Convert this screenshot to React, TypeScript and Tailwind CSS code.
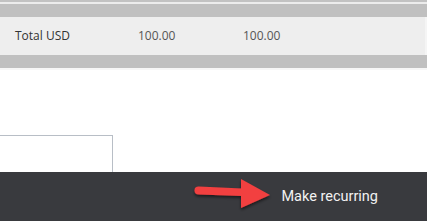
import React from 'react';

function Arrow() {
  return (
    <svg width="82" height="36" viewBox="0 0 82 36" className="absolute left-[192px] top-[5px]">
      <defs>
        <filter id="sh" x="-20%" y="-20%" width="140%" height="160%">
          <feDropShadow dx="0" dy="2" stdDeviation="1.5" floodColor="#000" floodOpacity="0.55" />
        </filter>
      </defs>
      <g filter="url(#sh)" fill="#f23f3f">
        <path d="M7 9.5 L50 11.5 L50 19 L7 17.5 Q2.5 17.3 2.5 13.5 Q2.5 9.3 7 9.5 Z" />
        <path d="M49 2 L78 18 L49 31 Z" />
      </g>
    </svg>
  );
}

export default function App() {
  return (
    <div className="w-[427px] h-[221px] bg-white flex flex-col overflow-hidden" style={{ fontFamily: '"Open Sans", "Liberation Sans", sans-serif' }}>
      <div className="h-[2px] bg-[#c2c2c2]" />
      <div className="h-[2px] bg-[#ececec]" />
      <div className="h-[13px] bg-[#c0c0c0]" />
      <div className="h-[38px] bg-[#eeeeee] flex items-center text-[12px] border-r-2 border-[#f5f5f5]">
        <span className="w-[138px] pl-[15px] text-[#333]">Total USD</span>
        <span className="w-[105px] text-[#555]">100.00</span>
        <span className="text-[#555]">100.00</span>
      </div>
      <div className="h-[13px] bg-[#c0c0c0]" />
      <div className="h-[2px] bg-[#f7f7f7]" />
      <div className="flex-1 flex flex-col justify-end">
        <div className="w-[113px] h-[37px] border border-l-0 border-b-0 border-[#b8bec6] bg-white" />
      </div>
      <div className="relative h-[49px] bg-[#393a3e] flex items-center justify-end pr-[49px]">
        <Arrow />
        <span className="text-[14.5px] text-[#f2f2f2]" style={{ fontFamily: 'Roboto, "Liberation Sans", sans-serif' }}>Make recurring</span>
      </div>
    </div>
  );
}
